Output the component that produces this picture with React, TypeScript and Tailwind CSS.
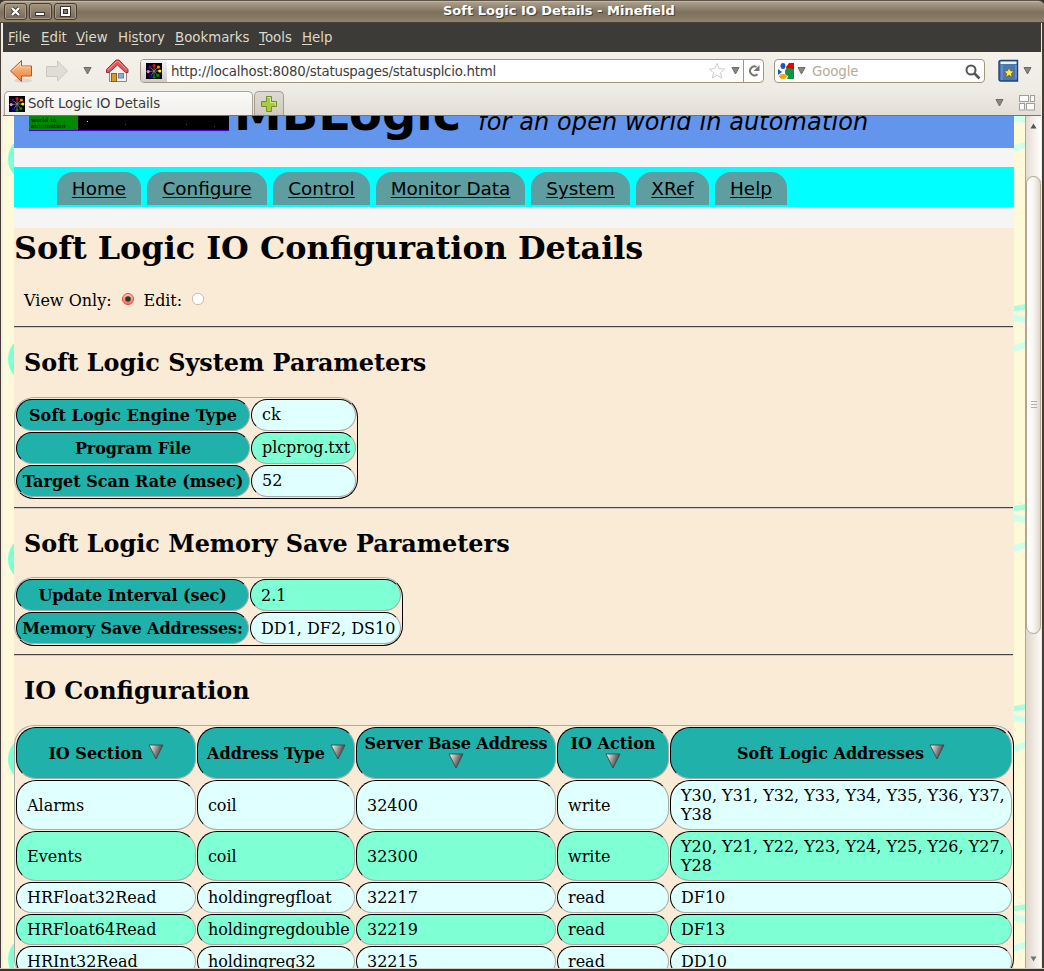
import React from "react";

const SANS = "font-['DejaVu_Sans',sans-serif]";
const SERIF = "font-['DejaVu_Serif',serif]";

function Favicon() {
  const dots: [number, number, string][] = [
    [8, 2.5, "#f00"],
    [12.4, 4, "#f80"],
    [13.8, 8, "#fe0"],
    [11.8, 12.4, "#080"],
    [8, 14, "#008000"],
    [4.5, 13.5, "#00f"],
    [2.2, 8.6, "#f7f"],
    [3.8, 4, "#50a"],
  ];
  return (
    <svg width="16" height="16" viewBox="0 0 16 16" className="shrink-0">
      <rect width="16" height="16" fill="#000" />
      {dots.map(([x, y, c], i) => (
        <g key={i}>
          <line x1="8" y1="8" x2={x} y2={y} stroke="#888" strokeWidth="0.8" />
          <circle cx={x} cy={y} r="1.6" fill={c} />
        </g>
      ))}
    </svg>
  );
}

function Caret({ className = "" }: { className?: string }) {
  return (
    <svg width="9" height="8" viewBox="0 0 9 8" className={"shrink-0 " + className}>
      <path d="M1 .5h7L4.5 7z" fill="#8a877f" stroke="#6d6a63" strokeWidth="1" />
    </svg>
  );
}

function WindowButton({ children }: { children: React.ReactNode }) {
  return (
    <div className="flex h-[17px] w-[23px] items-center justify-center rounded-[3px] border border-[#463d31] bg-linear-to-b from-[#a2947f] to-[#75695a] shadow-[inset_0_0_0_1px_#a89b88]">
      <svg width="11" height="11" viewBox="0 0 11 11">{children}</svg>
    </div>
  );
}

function TitleBar() {
  return (
    <div className="flex h-[23px] shrink-0 items-start rounded-t-md border-b border-t border-b-[#4b4339] border-t-[#5c5347] bg-linear-to-b from-[#b0a38f] via-[#7d705d] via-55% to-[#91836d] pl-[4px] pt-[2px] shadow-[inset_0_1px_0_#c3b8a8]">
      <div className="flex gap-[2px]">
        <WindowButton>
          <path d="M2 2l7 7M9 2l-7 7" stroke="#3d352b" strokeWidth="4" />
          <path d="M2 2l7 7M9 2l-7 7" stroke="#fff" strokeWidth="2.4" />
        </WindowButton>
        <WindowButton>
          <rect x="0" y="6" width="10" height="4" fill="#3d352b" />
          <rect x="1" y="7" width="8" height="2" fill="#fff" />
        </WindowButton>
        <WindowButton>
          <rect x="0" y="0" width="11" height="11" fill="#3d352b" />
          <rect x="2" y="2" width="7" height="7" fill="#857966" stroke="#fff" strokeWidth="2" />
          <rect x="3.500" y="3.500" width="4" height="4" fill="#857966" stroke="#3d352b" strokeWidth="1" />
        </WindowButton>
      </div>
      <div className="ml-[366px] -mt-px whitespace-nowrap text-[13px] font-bold leading-[17px] text-white [text-shadow:1px_1px_0_#4b4236]">
        Soft Logic IO Details - Minefield
      </div>
    </div>
  );
}

function MenuItem({ pre = "", u, post, w }: { pre?: string; u: string; post: string; w: string }) {
  return (
    <div className={w}>
      {pre}
      <span className="underline underline-offset-2">{u}</span>
      {post}
    </div>
  );
}

function MenuBar() {
  return (
    <div className="flex h-[29px] shrink-0 whitespace-nowrap bg-[#3c3b37] pl-[5px] text-[13.33px] leading-[29px] text-[#dfd8c8]">
      <MenuItem u="F" post="ile" w="w-[33px]" />
      <MenuItem u="E" post="dit" w="w-[35px]" />
      <MenuItem u="V" post="iew" w="w-[42px]" />
      <MenuItem pre="Hi" u="s" post="tory" w="w-[57px] tracking-[-0.1px]" />
      <MenuItem u="B" post="ookmarks" w="w-[84px]" />
      <MenuItem u="T" post="ools" w="w-[43px]" />
      <MenuItem u="H" post="elp" w="w-[40px]" />
    </div>
  );
}

function Toolbar() {
  return (
    <div className="flex h-[38px] shrink-0 items-center bg-linear-to-b from-[#f4f0ea] to-[#efebe5] pl-[6px] text-[13.33px]">
      <svg width="24" height="24" viewBox="0 0 24 24" className="shrink-0">
        <defs>
          <linearGradient id="back" x1="0" y1="0" x2="0" y2="1">
            <stop offset="0" stopColor="#fbcfa0" />
            <stop offset="1" stopColor="#ee7a2c" />
          </linearGradient>
        </defs>
        <ellipse cx="14" cy="21.500" rx="9" ry="2" fill="#dcd6cd" />
        <path d="M1.500 12L12.500 1.500V7H22.500v10h-10v5.500z" fill="url(#back)" stroke="#c4501b" />
        <path d="M3.200 12l8.300-8V8h10" fill="none" stroke="#fde0c2" strokeWidth=".8" />
      </svg>
      <svg width="24" height="24" viewBox="0 0 24 24" className="ml-[12px] shrink-0">
        <path d="M22.500 12L12.500 2v5.500H1.500v10h11V22z" fill="#e0ddd7" stroke="#cbc8c2" />
      </svg>
      <Caret className="ml-[14px]" />
      <svg width="24" height="24" viewBox="0 0 24 24" className="ml-[13px] shrink-0">
        <path d="M4.500 11v11.500h17V11L13 4z" fill="#f0f1ee" stroke="#85878a" />
        <rect x="6.500" y="14.500" width="5" height="8" fill="#dc9a25" stroke="#8b6310" />
        <rect x="13.500" y="14.500" width="5" height="4.500" fill="#8cadd0" stroke="#76828e" />
        <path d="M1.500 13.500V10.500L11 1h3l9 9.500v3h-2.500l-8-7.500L4 13.500z" fill="#da5a5d" stroke="#a82a30" />
        <path d="M3 10.800L11.500 2.500h2l8 8.300" fill="none" stroke="#eb9999" />
      </svg>
      <div className="ml-[11px] flex h-[24px] w-[624px] items-center rounded-[4px] border border-[#a3967f] bg-white">
        <div className="flex h-[22px] w-[26px] items-center justify-center rounded-l-[3px] bg-linear-to-b from-[#f4f4f4] to-[#cccccf]">
          <Favicon />
        </div>
        <div className="ml-[4px] w-[537px] whitespace-nowrap pt-px tracking-[-0.22px] text-[#3c3c3c]">
          http://localhost:8080/statuspages/statusplcio.html
        </div>
        <svg width="18" height="18" viewBox="0 0 18 18" className="shrink-0">
          <path d="M9 1.500l2.200 5 5.300.6-4 3.600 1.200 5.300L9 13.300 4.300 16l1.200-5.300-4-3.600 5.300-.6z" fill="#fff" stroke="#ccc" />
        </svg>
        <Caret className="ml-[5px]" />
        <div className="ml-[3px] flex h-[22px] flex-1 items-center justify-center border-l border-[#a3967f]">
          <svg width="14" height="14" viewBox="0 0 14 14">
            <path d="M9.500 2.800A4.500 4.500 0 1 0 10.500 10.300" fill="none" stroke="#77746c" strokeWidth="2" />
            <path d="M12.500 1v6h-6z" fill="#77746c" />
          </svg>
        </div>
      </div>
      <div className="ml-[10px] flex h-[24px] w-[211px] items-center rounded-[4px] border border-[#a3967f] bg-white pl-[3px]">
        <svg width="16" height="16" viewBox="0 0 16 16" className="shrink-0">
          <path d="M8 0h8v6H8z" fill="#f00000" />
          <path d="M8 6h8v10H9z" fill="#0b9444" />
          <ellipse cx="5" cy="3" rx="2.500" ry="3" fill="#1859c4" />
          <path d="M0 6l4 3-4 3z" fill="#1859c4" />
          <path d="M8 0h3L8 4l1 4 2 3-2 5H7z" fill="#fff" />
          <circle cx="11" cy="9" r="4" fill="#0b9444" />
          <ellipse cx="5" cy="13.500" rx="3.800" ry="2.400" fill="#f4a50a" />
        </svg>
        <Caret className="ml-[3px]" />
        <div className="ml-[6px] flex-1 pt-px tracking-[-0.1px] text-[#b4aa98]">Google</div>
        <svg width="16" height="16" viewBox="0 0 16 16" className="mr-[3px] mt-px">
          <circle cx="6" cy="6" r="4.500" fill="#fff" stroke="#555" strokeWidth="2" />
          <path d="M9.500 9.500l5 5" stroke="#555" strokeWidth="2.600" />
        </svg>
      </div>
      <svg width="22" height="24" viewBox="0 0 22 24" className="ml-[12px] shrink-0">
        <path d="M2 3Q2 1.500 4 1.500h16.500V22H4Q2 22 2 20z" fill="#4b78b3" stroke="#1f4379" strokeWidth="1.400" />
        <path d="M3.500 2.500h16v2.500h-16z" fill="#eef1f5" />
        <path d="M5 6v15M19 6v14" stroke="#7ba1d2" />
        <path d="M12 8.500l1.500 3.300 3.700.4-2.800 2.400.8 3.600-3.200-1.900-3.200 1.900.8-3.600-2.800-2.400 3.700-.4z" fill="#fce94f" stroke="#76651c" strokeWidth=".8" />
      </svg>
      <Caret className="ml-[4px]" />
    </div>
  );
}

function TabStrip() {
  return (
    <div className="flex h-[26px] shrink-0 items-end border-b border-[#7c7468] bg-linear-to-b from-[#efebe5] to-[#e3ded5] pl-px text-[13.33px]">
      <div className="flex h-[24px] w-[249px] items-center rounded-t-[5px] border border-b-0 border-[#aaa499] bg-linear-to-b from-[#fbfaf8] to-[#f2efea] pl-[4px] text-[#3c3c3c]">
        <Favicon />
        <span className="ml-[3px] whitespace-nowrap tracking-[-0.12px]">Soft Logic IO Details</span>
      </div>
      <div className="ml-px flex h-[24px] w-[30px] items-center justify-center rounded-t-[5px] border border-b-0 border-[#a39d92] bg-linear-to-b from-[#dedad3] to-[#cfcac1]">
        <svg width="18" height="18" viewBox="0 0 18 18">
          <path d="M6.500 1.500h5v5h5v5h-5v5h-5v-5h-5v-5h5z" fill="#a9cc3d" stroke="#6f9122" />
          <path d="M7.500 2.500h3v5h5v3" fill="none" stroke="#d4e693" />
        </svg>
      </div>
      <div className="ml-auto flex h-[24px] items-center">
        <Caret />
        <svg width="17" height="17" viewBox="0 0 17 17" className="-mt-px ml-[15px] mr-[5px]">
          <g fill="#fbfaf8" stroke="#9f9f99">
            <rect x=".5" y="1.500" width="9" height="6" />
            <rect x="11.500" y="1.500" width="4" height="6" />
            <rect x=".5" y="9.500" width="5" height="6.500" />
            <rect x="7.500" y="9.500" width="8" height="6.500" />
          </g>
        </svg>
      </div>
    </div>
  );
}

function LeftMargin() {
  return (
    <svg width="11" height="853" viewBox="0 0 11 853" className="block shrink-0 bg-[#fef9d8]">
      {[43, 243, 443, 643, 843].map((y) => (
        <circle key={y} cx="29" cy={y} r="24" fill="#7fffd4" />
      ))}
    </svg>
  );
}

function RightMargin() {
  return (
    <svg width="11" height="853" viewBox="0 0 11 853" className="block shrink-0 bg-[#fef9d8]">
      {[0, 200, 400, 600, 800].map((y) => (
        <g key={y}>
          <path d={`M0 ${y - 10}l11-2v6l-11 1z`} fill="#aaffdd" />
          <path d={`M0 ${y - 2}l11 3v6l-11-2z`} fill="#ccffec" />
          <path d={`M0 ${y + 29}l11-3v6l-11 4z`} fill="#ccffec" />
        </g>
      ))}
    </svg>
  );
}

function Scrollbar() {
  return (
    <div className="flex w-[16px] shrink-0 flex-col border-l border-[#b5a58e] bg-linear-to-r from-[#e0d6ca] to-[#fbf9f7]">
      <div className="flex h-[60px] items-start justify-center rounded-t-[8px] bg-linear-to-r from-[#e6dcd2] to-[#fff] pt-[7px]">
        <svg width="7" height="6" viewBox="0 0 7 6">
          <path d="M3.500 .5L6.500 5.500H.5z" fill="#55534e" />
        </svg>
      </div>
      <div className="flex h-[458px] flex-col items-center justify-center gap-[2px] rounded-[8px] border border-[#b5a58e] bg-linear-to-r from-white via-[#f8f6f3] to-[#dfd7ca] pb-[2px]">
        <div className="h-px w-[6px] bg-[#b9ae9c]" />
        <div className="h-px w-[6px] bg-[#b9ae9c]" />
        <div className="h-px w-[6px] bg-[#b9ae9c]" />
      </div>
      <div className="flex flex-1 items-end justify-center rounded-b-[8px] pb-[6px]">
        <svg width="7" height="6" viewBox="0 0 7 6">
          <path d="M3.500 5.500L6.500 .5H.5z" fill="#77746c" />
        </svg>
      </div>
    </div>
  );
}

function Banner() {
  return (
    <div className="flex h-[32px] shrink-0 items-end overflow-hidden bg-[#6495ed] pl-[15px]">
      <div className="flex h-[32px] shrink-0 flex-col">
        <div className="flex h-[15px] w-[200px] border-b border-[#4400dd] bg-black">
          <div className="flex h-[14px] w-[49px] flex-col justify-end overflow-hidden whitespace-nowrap bg-[#008a00] pb-px pl-[2px] font-['DejaVu_Serif',serif] text-[6px] leading-[6px] text-black">
            <div>world in</div>
            <div>automation</div>
          </div>
          <svg width="150" height="14" viewBox="0 0 150 14">
            <path d="M9 5h1v1H9z" fill="#ddd" />
            <path d="M47 8h1v1h-1zM108 8h1v1h-1zM136 10h1v1h-1z" fill="#444" />
          </svg>
        </div>
      </div>
      <div className="mb-[6px] ml-[5px] flex items-baseline whitespace-nowrap">
        <div className="text-[48px] font-bold leading-[48px]">MBLogic</div>
        <div className="ml-[17px] text-[24px] italic leading-[40px] tracking-[0.1px]">
          for an open world in automation
        </div>
      </div>
    </div>
  );
}

const NAV = ["Home", "Configure", "Control", "Monitor Data", "System", "XRef", "Help"];
const NAV_W = ["w-[84px]", "w-[120px]", "w-[97px]", "w-[149px]", "w-[99px]", "w-[73px]", "w-[72px]"];

function Nav() {
  return (
    <div className="flex h-[40px] shrink-0 gap-[6px] bg-[#00ffff] pl-[43px] pt-[5px]">
      {NAV.map((n, i) => (
        <a
          key={n}
          className={
            "block h-[33px] whitespace-nowrap rounded-t-[16px] bg-[#5f9ea0] text-center text-[18.400px] leading-[33px] underline underline-offset-2 decoration-1 " +
            NAV_W[i]
          }
        >
          {n}
        </a>
      ))}
    </div>
  );
}

const OUTSET = "rounded-[20px] border border-t-[#aaa] border-l-[#aaa] border-b-black border-r-black p-px gap-px grid";
const INSET = "rounded-[20px] border border-t-black border-l-black border-b-[#aaa] border-r-[#aaa] flex items-center";

function Head({ className = "", children }: { className?: string; children: React.ReactNode }) {
  return (
    <div className={INSET + " justify-center whitespace-nowrap bg-[#20b2aa] text-center font-bold " + className}>
      {children}
    </div>
  );
}

function Cell({ alt, className = "", children }: { alt: boolean; className?: string; children: React.ReactNode }) {
  return (
    <div className={INSET + " pl-[10px] " + (alt ? "bg-[#7fffd4] " : "bg-[#e0ffff] ") + className}>{children}</div>
  );
}

function SortArrow({ className = "" }: { className?: string }) {
  return (
    <svg width="16" height="16" viewBox="0 0 16 16" className={"inline-block " + className}>
      <defs>
        <linearGradient id="sort" x1="0" y1="0.200" x2="0.800" y2="0.500">
          <stop offset="0.050" stopColor="#eee" />
          <stop offset="0.950" stopColor="#555" />
        </linearGradient>
      </defs>
      <path d="M1 1h14L8 15z" fill="url(#sort)" stroke="#444" strokeWidth=".9" />
    </svg>
  );
}

function Rule() {
  return <div className="mr-px h-[2px] shrink-0 border-b border-t border-b-[#ccc] border-t-[#444]" />;
}

function H2({ className, children }: { className: string; children: React.ReactNode }) {
  return (
    <h2 className={"shrink-0 whitespace-nowrap pl-[10px] text-[23.900px] font-bold leading-[28px] " + className}>
      {children}
    </h2>
  );
}

const ROWS = [
  ["Alarms", "coil", "32400", "write", "Y30, Y31, Y32, Y33, Y34, Y35, Y36, Y37, Y38"],
  ["Events", "coil", "32300", "write", "Y20, Y21, Y22, Y23, Y24, Y25, Y26, Y27, Y28"],
  ["HRFloat32Read", "holdingregfloat", "32217", "read", "DF10"],
  ["HRFloat64Read", "holdingregdouble", "32219", "read", "DF13"],
  ["HRInt32Read", "holdingreg32", "32215", "read", "DD10"],
];

function Body() {
  return (
    <div className={"flex flex-1 flex-col bg-[#faebd7] text-[16px] leading-[19px] " + SERIF}>
      <h1 className="h-[62px] shrink-0 whitespace-nowrap pt-px text-[31.850px] font-bold leading-[38px]">
        Soft Logic IO Configuration Details
      </h1>
      <div className="flex h-[36px] shrink-0 pl-[10px]">
        <span className="pt-px">View Only:</span>
        <svg width="14" height="14" viewBox="0 0 14 14" className="ml-[9px] mt-[2px]">
          <defs>
            <linearGradient id="radio" x1="0" y1="0" x2="0" y2="1">
              <stop offset="0" stopColor="#fbc9c0" />
              <stop offset="1" stopColor="#f4705c" />
            </linearGradient>
          </defs>
          <circle cx="7" cy="7" r="5.500" fill="url(#radio)" stroke="#e84a36" />
          <circle cx="7" cy="7" r="2.800" fill="#333" />
        </svg>
        <span className="ml-[9px] pt-px tracking-[-0.1px]">Edit:</span>
        <svg width="14" height="14" viewBox="0 0 14 14" className="ml-[9px] mt-[2px]">
          <circle cx="7" cy="7" r="5.700" fill="#fff" stroke="#c9bfb2" />
        </svg>
      </div>
      <Rule />
      <H2 className="mt-[21px] h-[48px]">Soft Logic System Parameters</H2>
      <div className={OUTSET + " h-[102px] w-[344px] shrink-0 grid-cols-[234px_105px] grid-rows-[32px_32px_32px]"}>
        <Head className="tracking-[0.1px]">Soft Logic Engine Type</Head>
        <Cell alt={false} className="pb-[2px]">ck</Cell>
        <Head className="tracking-[-0.1px]">Program File</Head>
        <Cell alt className="pb-[2px] tracking-[-0.1px]">plcprog.txt</Cell>
        <Head>Target Scan Rate (msec)</Head>
        <Cell alt={false} className="pb-[2px]">52</Cell>
      </div>
      <div className="h-[8px] shrink-0" />
      <Rule />
      <H2 className="mt-[21px] h-[47px]">Soft Logic Memory Save Parameters</H2>
      <div className={OUTSET + " h-[69px] w-[389px] shrink-0 grid-cols-[233px_151px] grid-rows-[32px_32px]"}>
        <Head className="tracking-[-0.1px]">Update Interval (sec)</Head>
        <Cell alt>2.1</Cell>
        <Head className="tracking-[-0.07px]">Memory Save Addresses:</Head>
        <Cell alt={false}>
          <span className="whitespace-nowrap">DD1, DF2, DS10</span>
        </Cell>
      </div>
      <div className="h-[8px] shrink-0" />
      <Rule />
      <H2 className="mt-[21px] h-[48px]">IO Configuration</H2>
      <div
        className={
          OUTSET +
          " w-[1000px] shrink-0 grid-cols-[180px_158px_200px_112px_342px] grid-rows-[52px_50px_50px_31px_31px_31px]"
        }
      >
        <Head>
          IO Section <SortArrow className="ml-[5px] -mt-[3px]" />
        </Head>
        <Head className="pl-px">
          Address Type <SortArrow className="ml-[5px] -mt-[3px]" />
        </Head>
        <Head className="pb-[3px]">
          <div className="flex flex-col items-center tracking-[-0.05px]">
            Server Base Address
            <SortArrow />
          </div>
        </Head>
        <Head className="pb-[3px]">
          <div className="flex flex-col items-center">
            IO Action
            <SortArrow />
          </div>
        </Head>
        <Head>
          Soft Logic Addresses <SortArrow className="ml-[5px] -mt-[3px]" />
        </Head>
        {ROWS.map((r, i) =>
          r.map((c, j) => (
            <Cell key={i + "-" + j} alt={i % 2 === 1} className={j === 1 ? "tracking-[-0.1px]" : ""}>
              {c}
            </Cell>
          ))
        )}
      </div>
    </div>
  );
}

export default function App() {
  return (
    <div className={"flex h-[971px] w-[1044px] flex-col overflow-hidden bg-[#3b342b] text-black " + SANS}>
      <TitleBar />
      <div className="flex h-[945px] shrink-0 flex-col border-l border-r-2 border-l-[#463d34] border-r-[#463d34] bg-[#f2ece6] pl-[2px] pr-px">
        <MenuBar />
        <Toolbar />
        <TabStrip />
        <div className="flex h-[852px] shrink-0 overflow-hidden">
          <LeftMargin />
          <div className="flex h-[900px] w-[1000px] shrink-0 flex-col bg-[#f5f5f5]">
            <Banner />
            <div className="h-[19px] shrink-0" />
            <Nav />
            <div className="h-[21px] shrink-0" />
            <Body />
          </div>
          <RightMargin />
          <Scrollbar />
        </div>
      </div>
      <div className="h-px shrink-0 bg-[#d8cfc4]" />
    </div>
  );
}
